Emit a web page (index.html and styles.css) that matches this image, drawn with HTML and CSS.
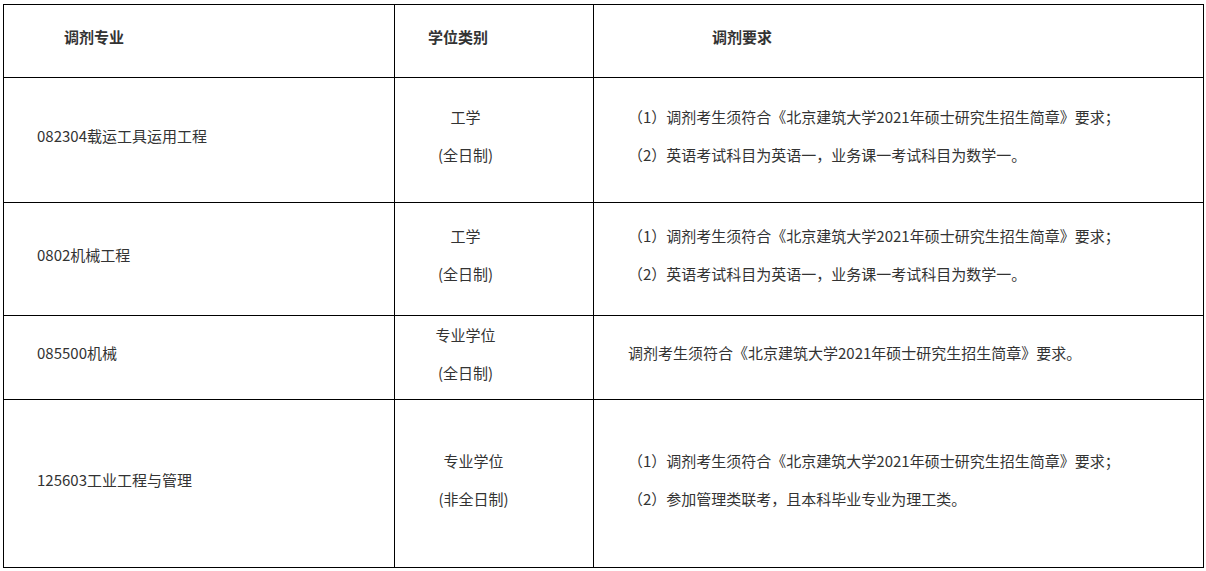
FILE: index.html
```html
<!DOCTYPE html>
<html lang="zh-CN">
<head>
<meta charset="utf-8">
<link rel="stylesheet" href="styles.css">
</head>
<body>
<table class="tbl">
  <colgroup>
    <col class="c1"><col class="c2"><col class="c3">
  </colgroup>
  <tr class="r-head">
    <th class="h1">调剂专业</th>
    <th class="h2">学位类别</th>
    <th class="h3">调剂要求</th>
  </tr>
  <tr class="r1">
    <td class="major">082304载运工具运用工程</td>
    <td class="degree"><p>工学</p><p>(全日制)</p></td>
    <td class="req"><p>（1）调剂考生须符合《北京建筑大学2021年硕士研究生招生简章》要求；</p><p>（2）英语考试科目为英语一，业务课一考试科目为数学一。</p></td>
  </tr>
  <tr class="r2">
    <td class="major">0802机械工程</td>
    <td class="degree"><p>工学</p><p>(全日制)</p></td>
    <td class="req"><p>（1）调剂考生须符合《北京建筑大学2021年硕士研究生招生简章》要求；</p><p>（2）英语考试科目为英语一，业务课一考试科目为数学一。</p></td>
  </tr>
  <tr class="r3">
    <td class="major">085500机械</td>
    <td class="degree degree-top"><p>专业学位</p><p>(全日制)</p></td>
    <td class="req"><p>调剂考生须符合《北京建筑大学2021年硕士研究生招生简章》要求。</p></td>
  </tr>
  <tr class="r4">
    <td class="major">125603工业工程与管理</td>
    <td class="degree degree-wide"><p>专业学位</p><p>(非全日制)</p></td>
    <td class="req"><p>（1）调剂考生须符合《北京建筑大学2021年硕士研究生招生简章》要求；</p><p>（2）参加管理类联考，且本科毕业专业为理工类。</p></td>
  </tr>
</table>
</body>
</html>
```
FILE: styles.css
```css
html, body {
  margin: 0;
  background: #fff;
}
body {
  padding: 4px 3px;
  font-family: "Noto Sans CJK SC", "Microsoft YaHei", sans-serif;
  font-size: 15px;
  color: #333;
}
.tbl {
  border-collapse: collapse;
  table-layout: fixed;
  width: 1200px;
}
.c1 { width: 391px; }
.c2 { width: 199px; }
.c3 { width: 610px; }
.tbl th, .tbl td {
  border: 1px solid #000;
  vertical-align: middle;
  text-align: left;
  padding-top: 0;
  padding-right: 0;
  padding-bottom: 8px;
  line-height: 38px;
}
.tbl p { margin: 0; }
.tbl th { font-weight: bold; }
.r-head { height: 73px; }
.r1 { height: 125px; }
.r2 { height: 113px; }
.r3 { height: 84px; }
.r4 { height: 168px; }
.tbl .r3 td { padding-bottom: 10px; }
.tbl .r3 .degree-top { vertical-align: top; padding-bottom: 6px; }
.tbl .h1 { padding-left: 60px; }
.tbl .h2 { padding-left: 33px; }
.tbl .h3 { padding-left: 118px; }
.tbl .major { padding-left: 33px; }
.tbl .degree { text-align: center; padding-left: 20px; padding-right: 77px; }
.tbl .degree-wide { padding-left: 22px; padding-right: 63px; }
.tbl .req { padding-left: 34px; }
```
